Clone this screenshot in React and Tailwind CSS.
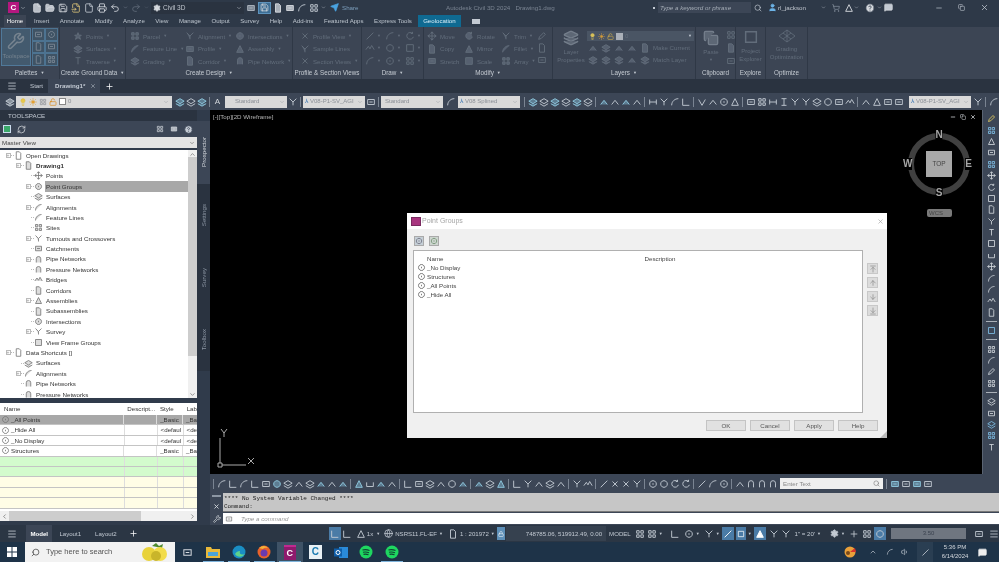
import React from 'react';
import {
  Menu, Plus, X, Minus, Search, Settings, Save, FolderOpen, File, FileInput, Printer, Undo2, Redo2, Send,
  ChevronUp, ChevronDown, ChevronLeft, ChevronRight, Wrench, RefreshCw, Globe, Lock, Volume1, MessageSquare, Lightbulb,
  Sun, LockOpen, User, ShoppingCart, Copy, Layers, ArrowUp, ArrowDown, ArrowUpToLine, ArrowDownToLine, CircleHelp,
} from 'lucide-react';

const P = {
  a: 'M2 10L10 2', b: 'M2 2h8v8H2z', c: 'M6 2a4 4 0 1 0 .01 0', d: 'M2 3v6M10 3v6M2 6h8', e: 'M2 10h8M2 10V2',
  f: 'M2 10C2 5 6 2 10 2', g: 'M2 2h3v3H2zM7 2h3v3H7zM2 7h3v3H2zM7 7h3v3H7z', h: 'M6 2l4 8H2z', i: 'M6 2v8M3 10h6M3 2h6',
  j: 'M6 1v10M1 6h10M4 3l2-2 2 2M4 9l2 2 2-2M3 4L1 6l2 2M9 4l2 2-2 2', k: 'M3 3l6 6M9 3l-6 6', l: 'M1 5l5-3 5 3-5 3zM1 8l5 3 5-3',
  m: 'M2 3h8v6H2zM4 6h4', n: 'M3 10V5a3 3 0 0 1 6 0v5', o: 'M6 2a4 4 0 1 0 .01 0M6 5v2', p: 'M2 10l1-3 5-5 2 2-5 5z',
  q: 'M2 9l4-5 4 5', r: 'M9 3a4 4 0 1 0 1 4M9 1v2H7', s: 'M6 2l1 3h3l-2 2 1 3-3-2-3 2 1-3-2-2h3z', t: 'M3 2h6M6 2v8',
  u: 'M2 4v5h8V4', v: 'M2 3l4 7 4-7', w: 'M1 8l3-4 2 3 2-4 3 5', x: 'M3 1h4l2 2v8H3z', y: 'M2 2l4 4v4M10 2L6 6', z: 'M2 3h8L2 9h8',
};

const Ico = ({ k, size = 10, className = 'text-[#c3cad3]', fill = 'none' }) => (
  <svg width={size} height={size} viewBox="0 0 12 12" fill={fill} stroke="currentColor" strokeWidth="1.1" className={`shrink-0 ${className}`}>
    <path d={P[k]} />
  </svg>
);

// '|' is a separator, capitals get the blue accent
const Strip = ({ seq, className = '' }) => (
  <div className={`flex items-center ${className}`}>
    {seq.split('').map((c, i) =>
      c === '|' ? (
        <div key={i} className="w-px h-[10px] bg-[#7a8492] mx-[2px] shrink-0" />
      ) : c === c.toUpperCase() ? (
        <div key={i} className="w-[11px] flex justify-center shrink-0"><Ico k={c.toLowerCase()} className="text-[#8fcbe0]" fill="#5d7d92" /></div>
      ) : (
        <div key={i} className="w-[11px] flex justify-center shrink-0"><Ico k={c} /></div>
      )
    )}
  </div>
);

const Combo = ({ w, children }) => (
  <div className={`${w} h-[12px] bg-[#d9d9d9] flex items-center px-[2px] text-[6px] text-[#8a8f96] shrink-0`}>
    {children}
    <ChevronDown size={6} className="ml-auto text-[#9aa0a6]" />
  </div>
);

const Caret = ({ className = '' }) => <span className={`text-[4px] ${className}`}>▼</span>;

const TitleBar = () => (
  <div className="h-[15px] bg-[#2e3948] flex items-center relative text-[6.2px] text-[#8d97a4] shrink-0">
    <div className="ml-[8px] w-[11px] h-[11px] bg-[#b5177f] text-white text-[8px] font-bold flex items-center justify-center">C</div>
    <ChevronDown size={6} className="ml-[1px] text-[#c3cad3]" />
    <div className="flex items-center gap-[3px] ml-[6px]">
      <File size={10} className="text-[#d5d9de]" fill="#b8bec6" />
      <FolderOpen size={10} className="text-[#d5d9de]" fill="#b8bec6" />
      <Save size={10} className="text-[#d5d9de]" />
      <FileInput size={10} className="text-[#d8c27a]" />
      <File size={10} className="text-[#c3cad3]" />
      <Printer size={10} className="text-[#d5d9de]" />
      <Undo2 size={10} className="text-[#d5d9de]" />
      <ChevronDown size={5} className="text-[#8d97a4]" />
      <Redo2 size={10} className="text-[#606b79]" />
      <ChevronDown size={5} className="text-[#606b79]" />
    </div>
    <div className="ml-[2px] w-[93px] h-[12px] bg-[#2a3340] flex items-center px-[2px] text-[6.5px] text-[#c0c6ce] shrink-0">
      <Settings size={8} className="mr-[2px] text-[#d5d9de]" fill="#d5d9de" />Civil 3D
      <ChevronDown size={6} className="ml-auto" />
    </div>
    <div className="flex items-center gap-[2px] ml-[2px]">
      <Ico k="m" className="text-[#aeb6c0]" fill="#7c8794" />
      <div className="w-[13px] h-[12px] bg-[#3d6e95] border border-[#5d93bd] flex items-center justify-center"><Save size={9} className="text-[#d5d9de]" /></div>
      <Ico k="x" className="text-[#d5d9de]" fill="#a9b0b9" />
      <Ico k="m" className="text-[#d5d9de]" fill="#a9b0b9" />
      <Ico k="f" />
      <Ico k="g" />
      <ChevronDown size={5} className="text-[#c3cad3]" />
      <Send size={9} className="ml-[2px] text-[#4aa3e0]" fill="#4aa3e0" />
    </div>
    <span className="ml-[3px] text-[#7d9fbd]">Share</span>
    <span className="absolute left-[446px] text-[#7a8492]">Autodesk Civil 3D 2024&nbsp;&nbsp;&nbsp;Drawing1.dwg</span>
    <div className="absolute left-[653px] flex items-center">
      <div className="w-[2px] h-[2px] bg-[#c3cad3] mr-[3px]" />
      <div className="w-[93px] h-[11px] bg-[#3c4656] flex items-center px-[2px] italic text-[#a4acb6]">Type a keyword or phrase</div>
      <Search size={8} className="ml-[3px] text-[#c3cad3]" />
      <User size={9} className="ml-[6px] text-[#6db4e8]" fill="#6db4e8" />
      <span className="ml-[1px] text-[#c0c6ce]">rl_jackson</span>
      <ChevronDown size={5} className="ml-[15px] text-[#c3cad3]" />
      <ShoppingCart size={8} className="ml-[6px] text-[#8d97a4]" />
      <Ico k="h" className="ml-[4px] text-[#d5d9de]" />
      <ChevronDown size={5} className="text-[#c3cad3]" />
      <CircleHelp size={10} className="ml-[6px] text-[#303b4b]" fill="#d5d9de" />
      <ChevronDown size={5} className="ml-[2px] text-[#c3cad3]" />
      <MessageSquare size={9} className="ml-[2px] text-[#d5d9de]" fill="#c3cad3" />
    </div>
    <div className="absolute left-[935px] flex items-center gap-[15px] text-[#c3cad3]">
      <Minus size={8} />
      <Copy size={7} />
      <X size={9} />
    </div>
  </div>
);

const tabs = ['Insert', 'Annotate', 'Modify', 'Analyze', 'View', 'Manage', 'Output', 'Survey', 'Help', 'Add-ins', 'Featured Apps', 'Express Tools'];

const TabRow = () => (
  <div className="h-[12px] bg-[#2e3948] flex items-end text-[6.1px] text-[#bcc4cd] shrink-0">
    <div className="ml-[4px] w-[22px] h-[12px] bg-[#3c4554] text-white flex items-center justify-center">Home</div>
    <div className="flex items-center gap-[10.5px] h-[12px] ml-[8px]">
      {tabs.map(t => <span key={t}>{t}</span>)}
    </div>
    <div className="ml-[6px] w-[43px] h-[12px] bg-[#0f6a92] text-[#d8eef8] flex items-center justify-center">Geolocation</div>
    <div className="ml-[11px] mb-[3px] w-[8px] h-[5px] bg-[#c3cad3]" />
  </div>
);

const DIM = 'text-[#626d7b]';

const Item = ({ k, label, w = 'w-auto', drop = true }) => (
  <div className={`h-[12.5px] shrink-0 flex items-center gap-[3px] text-[6.1px] ${DIM} ${w} whitespace-nowrap`}>
    <Ico k={k} className={DIM} fill="#566070" />
    <span>{label}</span>
    {drop && <Caret />}
  </div>
);

const Panel = ({ title, w, caret = true, children, className = '' }) => (
  <div className={`${w} shrink-0 flex flex-col border-r border-[#2f3846]`}>
    <div className={`h-[40px] flex ${className}`}>{children}</div>
    <div className="h-[12px] flex items-center justify-center text-[6.3px] text-[#c5cbd2] whitespace-nowrap">
      {title}{caret && <Caret className="ml-[3px]" />}
    </div>
  </div>
);

const Col = ({ children, className = '' }) => <div className={`flex flex-col pt-[3px] ${className}`}>{children}</div>;

const Ribbon = () => (
  <div className="h-[52px] bg-[#3c4554] flex shrink-0">
    <Panel title="Palettes" w="w-[60px]" className="p-[1px]">
      <div className="w-[30px] h-[38px] bg-[#435a6e] border border-[#50799a] flex flex-col items-center">
        <Wrench size={18} className="mt-[3px] text-[#76838f]" />
        <span className="mt-[2px] text-[6px] text-[#76838f]">Toolspace</span>
      </div>
      <div className="grid grid-cols-2 grid-rows-3 ml-[1px] w-[26px]">
        {['m', 'o', 'x', 'm', 'x', 'g'].map((k, i) => (
          <div key={i} className="bg-[#3f5365] border border-[#4d7391] flex items-center justify-center"><Ico k={k} size={9} className="text-[#7e8a96]" /></div>
        ))}
      </div>
    </Panel>
    <Panel title="Create Ground Data" w="w-[66px]" className="pl-[13px]">
      <Col>
        <Item k="s" label="Points" />
        <Item k="l" label="Surfaces" />
        <Item k="t" label="Traverse" />
      </Col>
    </Panel>
    <Panel title="Create Design" w="w-[167px]" className="pl-[4px]">
      <Col className="w-[55px]">
        <Item k="g" label="Parcel" />
        <Item k="f" label="Feature Line" />
        <Item k="l" label="Grading" />
      </Col>
      <Col className="w-[50px]">
        <Item k="y" label="Alignment" />
        <Item k="m" label="Profile" />
        <Item k="x" label="Corridor" />
      </Col>
      <Col>
        <Item k="o" label="Intersections" />
        <Item k="h" label="Assembly" />
        <Item k="n" label="Pipe Network" />
      </Col>
    </Panel>
    <Panel title="Profile & Section Views" w="w-[69px]" caret={false} className="pl-[7px]">
      <Col>
        <Item k="k" label="Profile View" />
        <Item k="y" label="Sample Lines" drop={false} />
        <Item k="k" label="Section Views" />
      </Col>
    </Panel>
    <Panel title="Draw" w="w-[62px]" className="pl-[3px]">
      <div className="grid grid-cols-3 gap-x-[4px] pt-[3px] h-[40px]">
        {['a', 'f', 'r', 'w', 'c', 'b', 'f', 'o', 'g'].map((k, i) => (
          <div key={i} className="flex items-center gap-[2px]"><Ico k={k} className={DIM} /><Caret className={DIM} /></div>
        ))}
      </div>
    </Panel>
    <Panel title="Modify" w="w-[129px]" className="pl-[3px]">
      <Col className="w-[37px]">
        <Item k="j" label="Move" drop={false} />
        <Item k="x" label="Copy" drop={false} />
        <Item k="m" label="Stretch" drop={false} />
      </Col>
      <Col className="w-[37px]">
        <Item k="r" label="Rotate" drop={false} />
        <Item k="h" label="Mirror" drop={false} />
        <Item k="b" label="Scale" drop={false} />
      </Col>
      <Col className="w-[36px]">
        <Item k="y" label="Trim" />
        <Item k="f" label="Fillet" />
        <Item k="g" label="Array" />
      </Col>
      <Col>
        <Ico k="p" className={`${DIM} mt-[1px] mb-[2px]`} />
        <Ico k="x" className={`${DIM} mb-[2px]`} />
        <Ico k="m" className={DIM} />
      </Col>
    </Panel>
    <Panel title="Layers" w="w-[143px]" className="pl-[3px]">
      <div className={`w-[30px] flex flex-col items-center text-[6px] leading-[8px] ${DIM}`}>
        <Layers size={16} className="mt-[3px] text-[#747e8b]" fill="#5d6775" />
        <span className="mt-[2px]">Layer</span>
        <span>Properties</span>
      </div>
      <div className="flex flex-col ml-[1px] pt-[4px]">
        <div className="w-[107px] h-[10px] bg-[#4a5564] flex items-center gap-[2px] px-[2px]">
          <Lightbulb size={7} className="text-[#d8c15a]" fill="#d8c15a" />
          <Sun size={7} className="text-[#d09a3a]" fill="#d09a3a" />
          <LockOpen size={7} className="text-[#d8b14a]" />
          <div className="w-[7px] h-[7px] bg-[#aab0b8]" />
          <span className={`text-[6px] ${DIM}`}>0</span>
          <Caret className="ml-auto text-[#c3cad3]" />
        </div>
        <div className={`h-[13px] flex items-center gap-[3px] pl-[1px] text-[6.1px] ${DIM}`}>
          {['q', 'l', 'q', 'q', 'x'].map((k, i) => <Ico key={i} k={k} className={DIM} fill="#566070" />)}
          <span>Make Current</span>
        </div>
        <div className={`h-[12px] flex items-center gap-[3px] pl-[1px] text-[6.1px] ${DIM}`}>
          {['l', 'l', 'l', 'q', 'l'].map((k, i) => <Ico key={i} k={k} className={DIM} fill="#566070" />)}
          <span>Match Layer</span>
        </div>
      </div>
    </Panel>
    <Panel title="Clipboard" w="w-[40px]" caret={false} className="pl-[7px]">
      <div className={`flex flex-col items-center text-[6px] ${DIM}`}>
        <Copy size={16} className="mt-[3px] text-[#747e8b]" fill="#5d6775" />
        <span className="mt-[2px]">Paste</span>
        <Caret />
      </div>
      <div className="flex flex-col ml-[7px] gap-[3px] pt-[3px]">
        <Ico k="g" className={DIM} />
        <Ico k="x" className={DIM} fill="#566070" />
        <Ico k="m" className={DIM} />
      </div>
    </Panel>
    <Panel title="Explore" w="w-[30px]" caret={false}>
      <div className={`w-full flex flex-col items-center text-[6px] leading-[8px] ${DIM}`}>
        <Ico k="b" size={16} className={`${DIM} mt-[2px]`} />
        <span className="mt-[2px]">Project</span>
        <span>Explorer</span>
      </div>
    </Panel>
    <Panel title="Optimize" w="w-[42px]" caret={false}>
      <div className={`w-full flex flex-col items-center text-[6px] leading-[8px] ${DIM}`}>
        <svg width="18" height="14" viewBox="0 0 18 14" fill="none" stroke="currentColor" strokeWidth="0.8" className={`${DIM} mt-[2px]`}>
          <path d="M9 1l8 6-8 6-8-6zM5 4l8 6M9 1v12M13 4L5 10" />
        </svg>
        <span className="mt-[2px]">Grading</span>
        <span>Optimization</span>
      </div>
    </Panel>
  </div>
);

const DocTabs = () => (
  <div className="h-[14px] bg-[#2a3340] flex items-center text-[6.2px] text-[#c3cad3] shrink-0">
    <Menu size={10} className="ml-[7px]" />
    <span className="ml-[13px]">Start</span>
    <div className="ml-[5px] w-[52px] h-[14px] bg-[#3c4656] flex items-center pl-[7px] font-bold">
      Drawing1*<X size={6} className="ml-[5px] font-normal" />
    </div>
    <Plus size={9} className="ml-[5px] text-white" />
  </div>
);

const TopToolbar = () => (
  <div className="h-[17px] bg-[#3c4656] flex items-center shrink-0 overflow-hidden">
    <div className="ml-[5px]"><Ico k="l" className="text-[#c3cad3]" fill="#8a949f" /></div>
    <div className="ml-[1px] w-[156px] h-[12px] bg-[#d9d9d9] flex items-center gap-[2px] px-[3px] text-[6px] text-[#8a8f96] shrink-0">
      <Lightbulb size={8} className="text-[#e0b93a]" fill="#e8c94a" />
      <Sun size={8} className="text-[#e09a2a]" fill="#e8a83a" />
      <Ico k="g" size={8} className="text-[#8a8f96]" />
      <LockOpen size={8} className="text-[#d98a1a]" />
      <div className="w-[7px] h-[7px] bg-white border border-[#888]" />
      <span>0</span>
      <ChevronDown size={6} className="ml-auto text-[#9aa0a6]" />
    </div>
    <Strip seq="LlL|" className="ml-[2px]" />
    <span className="w-[12px] text-center text-[8px] text-[#d5d9de]">A</span>
    <div className="ml-[2px]"><Combo w="w-[62px]"><span className="ml-[8px]">Standard</span></Combo></div>
    <Strip seq="y|" />
    <Combo w="w-[62px]"><span className="text-[#2f6fb0] mr-[2px]">⅄</span>V08-P1-SV_AGI</Combo>
    <Strip seq="m|" />
    <Combo w="w-[62px]"><span className="ml-[2px]">Standard</span></Combo>
    <Strip seq="f" className="mx-[2px]" />
    <Combo w="w-[62px]"><span className="text-[#2f6fb0] mr-[2px]">⅄</span>V08 Splined</Combo>
    <Strip seq="|LlLlLl|QqQq|dyfe|vqoh|mgdiyylcmw|qhmm" className="ml-[2px]" />
    <div className="ml-[5px]"><Combo w="w-[62px]"><span className="text-[#2f6fb0] mr-[2px]">⅄</span>V08-P1-SV_AGI</Combo></div>
    <Strip seq="y|f" className="ml-[1px]" />
  </div>
);

const treeRows = [
  ['Open Drawings', 0, 'x', true],
  ['Drawing1', 1, 'x', true, true],
  ['Points', 2, 'j', false],
  ['Point Groups', 2, 'o', true],
  ['Surfaces', 2, 'l', false],
  ['Alignments', 2, 'f', true],
  ['Feature Lines', 2, 'f', false],
  ['Sites', 2, 'g', false],
  ['Turnouts and Crossovers', 2, 'y', true],
  ['Catchments', 2, 'm', false],
  ['Pipe Networks', 2, 'n', true],
  ['Pressure Networks', 2, 'n', false],
  ['Bridges', 2, 'w', false],
  ['Corridors', 2, 'x', false],
  ['Assemblies', 2, 'h', true],
  ['Subassemblies', 2, 'x', false],
  ['Intersections', 2, 'o', false],
  ['Survey', 2, 'y', true],
  ['View Frame Groups', 2, 'b', false],
  ['Data Shortcuts []', 0, 'x', true],
  ['Surfaces', 1, 'l', false],
  ['Alignments', 1, 'f', true],
  ['Pipe Networks', 1, 'n', false],
  ['Pressure Networks', 1, 'n', false],
];

const indentCls = ['pl-[5px]', 'pl-[15px]', 'pl-[25px]'];

const Tree = () => (
  <div className="h-[248px] bg-white flex overflow-hidden shrink-0">
    <div className="flex-1 min-w-0">
      {treeRows.map(([label, lvl, k, exp, bold], i) => (
        <div key={i} className={`h-[10.4px] flex items-center ${indentCls[lvl]} text-[#333] text-[6.2px] whitespace-nowrap`}>
          <div className="w-[6px] h-[6px] flex items-center justify-center shrink-0">
            {exp && <div className="w-[5px] h-[5px] border border-[#bbb] text-[#999] text-[5px] leading-[3px] text-center">+</div>}
          </div>
          <div className="w-[3px] border-t border-dotted border-[#bbb] shrink-0" />
          <Ico k={k} size={9} className="text-[#777]" fill={lvl === 0 ? 'none' : '#ddd'} />
          <div className={`ml-[2px] flex-1 h-[10.4px] flex items-center pl-[1px] ${label === 'Point Groups' ? 'bg-[#a8a8a8]' : ''} ${bold ? 'font-bold' : ''}`}>{label}</div>
        </div>
      ))}
    </div>
    <div className="w-[9px] bg-[#f0f0f0] flex flex-col items-center shrink-0">
      <ChevronUp size={7} className="mt-[1px] text-[#555]" />
      <div className="w-full h-[199px] bg-[#cdcdcd] mt-[-1px]" />
      <ChevronDown size={7} className="mt-auto text-[#555]" />
    </div>
  </div>
);

const tableRows = [
  ['_All Points', '_Basic', '_Ba', 'bg-[#a8a8a8]'],
  ['_Hide All', '<defaul', '<de', 'bg-white'],
  ['_No Display', '<defaul', '<de', 'bg-white'],
  ['Structures', '_Basic', '_Ba', 'bg-white'],
  ['', '', '', 'bg-[#d3fbcd]'],
  ['', '', '', 'bg-[#d3fbcd]'],
  ['', '', '', 'bg-[#fffde6]'],
  ['', '', '', 'bg-[#fffde6]'],
  ['', '', '', 'bg-[#fffde6]'],
];

const PointTable = () => (
  <div className="flex-1 bg-white flex flex-col text-[6.2px] text-[#333] overflow-hidden">
    <div className="h-[12px] flex items-center shrink-0">
      <div className="w-[125px] pl-[4px]">Name</div>
      <div className="w-[33px] pl-[4px] whitespace-nowrap">Descript...</div>
      <div className="w-[26px] pl-[4px]">Style</div>
      <div className="pl-[5px]">Lab</div>
    </div>
    {tableRows.map(([n, s, l, bg], i) => (
      <div key={i} className={`h-[10.4px] flex items-center border-b border-[#c4c4c4] shrink-0 ${bg}`}>
        <div className="w-[125px] h-full flex items-center border-r border-[#ddd] pl-[1px] whitespace-nowrap">
          {n && <Ico k="o" size={9} className="text-[#777] mr-[1px]" />}{n}
        </div>
        <div className="w-[33px] h-full border-r border-[#ddd]" />
        <div className="w-[26px] h-full flex items-center border-r border-[#ddd] pl-[3px] overflow-hidden whitespace-nowrap">{s}</div>
        <div className="pl-[3px] overflow-hidden whitespace-nowrap">{l}</div>
      </div>
    ))}
    <div className="h-[10px] mt-auto bg-[#f0f0f0] flex items-center shrink-0">
      <ChevronLeft size={7} className="text-[#555] ml-[1px] mr-[1px]" />
      <div className="w-[132px] h-full bg-[#cdcdcd]" />
      <ChevronRight size={7} className="ml-auto text-[#555] mr-[1px]" />
    </div>
  </div>
);

const ToolspacePalette = () => (
  <div className="w-[197px] flex flex-col bg-[#303b4b] shrink-0 pb-[4px]">
    <div className="h-[11px] bg-[#2a3340] flex items-center pl-[8px] text-[6.2px] text-[#c3cad3] shrink-0">TOOLSPACE</div>
    <div className="h-[16px] bg-[#3c4656] flex items-center shrink-0">
      <div className="ml-[3px] w-[8px] h-[8px] bg-[#3aa86a] border border-[#cde] shrink-0" />
      <RefreshCw size={9} className="ml-[6px] text-[#d5d9de]" />
      <div className="ml-auto mr-[4px] flex gap-[6px] items-center">
        <Ico k="g" size={8} className="text-[#d5d9de]" />
        <Ico k="m" size={8} className="text-[#d5d9de]" fill="#aab0b8" />
        <CircleHelp size={9} className="text-[#3c4656]" fill="#c3cad3" />
      </div>
    </div>
    <div className="h-[11px] bg-[#e4e4e4] flex items-center px-[2px] text-[6.2px] text-[#444] shrink-0">
      Master View<ChevronDown size={6} className="ml-auto text-[#555]" />
    </div>
    <div className="h-[2px] shrink-0" />
    <Tree />
    <div className="h-[5px] shrink-0" />
    <PointTable />
  </div>
);

const VTab = ({ label, on }) => (
  <div className={`h-[62.5px] flex items-center justify-center text-[6.2px] ${on ? 'bg-[#3c4656] text-[#d5d9de]' : 'bg-[#2a3340] text-[#8d97a4]'}`}>
    <span className="[writing-mode:vertical-rl] rotate-180">{label}</span>
  </div>
);

const ViewCube = () => (
  <div className="absolute left-[698px] top-[23px] w-[62px] h-[62px] rounded-full border-[6px] border-[#404040] flex items-center justify-center">
    <div className="w-[26px] h-[26px] bg-[#a8a8a8] flex items-center justify-center text-[6.5px] text-[#444]">TOP</div>
    <span className="absolute -top-[10px] left-1/2 -translate-x-1/2 text-[10px] leading-[12px] font-bold text-[#a6a6a6] bg-black">N</span>
    <span className="absolute -bottom-[10px] left-1/2 -translate-x-1/2 text-[10px] leading-[12px] font-bold text-[#a6a6a6] bg-black">S</span>
    <span className="absolute -left-[11px] top-1/2 -translate-y-1/2 text-[10px] leading-[12px] font-bold text-[#a6a6a6] bg-black">W</span>
    <span className="absolute -right-[8px] top-1/2 -translate-y-1/2 text-[10px] leading-[12px] font-bold text-[#a6a6a6] bg-black">E</span>
  </div>
);

const ArrowBtn = ({ Icon }) => (
  <div className="w-[11px] h-[11px] bg-[#dcdcdc] border border-[#c8c8c8] flex items-center justify-center">
    <Icon size={8} className="text-[#888]" />
  </div>
);

const DlgBtn = ({ children }) => (
  <div className="w-[40px] h-[11px] bg-[#e1e1e1] border border-[#c4c4c4] flex items-center justify-center text-[6.2px] text-[#555]">{children}</div>
);

const Dialog = () => (
  <div className="absolute left-[197px] top-[103px] w-[480px] h-[225px] bg-[#f0f0f0] flex flex-col">
    <div className="h-[16px] bg-white flex items-center pl-[4px] text-[7px] text-[#a6a6a6]">
      <div className="w-[10px] h-[9px] bg-[#a8357f] border border-[#7a2a60] mr-[1px]" />
      Point Groups
      <X size={7} className="ml-auto mr-[3px] text-[#999]" />
    </div>
    <div className="h-[21px] flex items-center pl-[7px] gap-[5px] pt-[2px]">
      <div className="w-[10px] h-[10px] bg-[#c5cfd6] border border-[#aaa] flex items-center justify-center"><Ico k="o" size={8} className="text-[#667]" /></div>
      <div className="w-[10px] h-[10px] bg-[#cdd6cf] border border-[#aaa] flex items-center justify-center"><Ico k="o" size={8} className="text-[#686]" /></div>
    </div>
    <div className="flex pl-[6px]">
      <div className="w-[450px] h-[163px] bg-white border border-[#b0b0b0] text-[6.2px] text-[#444]">
        <div className="flex pt-[3px] h-[12px]">
          <span className="ml-[13px]">Name</span>
          <span className="ml-[201px]">Description</span>
        </div>
        {['_No Display', 'Structures', '_All Points', '_Hide All'].map(t => (
          <div key={t} className="h-[9px] flex items-center pl-[3px]">
            <Ico k="o" size={9} className="text-[#666]" />
            <span className="ml-[1px]">{t}</span>
          </div>
        ))}
      </div>
      <div className="ml-[4px] flex flex-col gap-[3px] pt-[13px]">
        <ArrowBtn Icon={ArrowUpToLine} />
        <ArrowBtn Icon={ArrowUp} />
        <ArrowBtn Icon={ArrowDown} />
        <ArrowBtn Icon={ArrowDownToLine} />
      </div>
    </div>
    <div className="flex justify-end gap-[4px] pr-[9px] pt-[7px]">
      <DlgBtn>OK</DlgBtn>
      <DlgBtn>Cancel</DlgBtn>
      <DlgBtn>Apply</DlgBtn>
      <DlgBtn>Help</DlgBtn>
    </div>
    <svg width="7" height="7" viewBox="0 0 7 7" className="absolute right-0 bottom-0 text-[#bbb]" fill="currentColor"><path d="M7 0v7H0z" /></svg>
  </div>
);

const Canvas = () => (
  <div className="flex-1 bg-black relative text-[6.2px] text-[#b5b5b5]">
    <span className="absolute left-[3px] top-[2px]">[-][Top][2D Wireframe]</span>
    <div className="absolute right-[6px] top-[4px] flex items-center gap-[4px] text-[#d5d9de]">
      <Minus size={6} strokeWidth={3} />
      <Copy size={6} />
      <X size={6} strokeWidth={3} />
    </div>
    <ViewCube />
    <div className="absolute left-[717px] top-[99px] w-[25px] h-[8px] bg-[#7a7a7a] rounded-[2px] text-[6px] leading-[8px] pl-[2px] text-[#444]">WCS</div>
    <Dialog />
    <svg width="46" height="44" viewBox="0 0 46 44" className="absolute left-[6px] bottom-[5px] text-[#aaa]" fill="none" stroke="currentColor" strokeWidth="1">
      <path d="M4 38V13M6 40h24M2 38h4v4H2z" />
      <path d="M32 33l6 6M38 33l-6 6" />
      <path d="M5 4l3 4 3-4M8 8v4" />
    </svg>
  </div>
);

const BottomToolbar = () => (
  <div className="h-[19px] bg-[#3c4656] flex items-center shrink-0 overflow-hidden">
    <Strip seq="|fefem" className="ml-[1px]" />
    <Strip seq="ClqlQqQ|HuQq|emlqcQ|QlH|ey" />
    <Strip seq="qlq|yw|akky|ocrr|afo|qnnn" />
    <div className="ml-[2px] w-[103px] h-[11px] bg-[#efefef] flex items-center px-[3px] text-[6.2px] text-[#888] shrink-0">
      Enter Text<Search size={7} className="ml-auto text-[#777]" />
    </div>
    <Strip seq="|MmMm" className="ml-[1px]" />
  </div>
);

const CommandLine = () => (
  <div className="h-[32px] flex bg-[#3c4656] shrink-0">
    <div className="w-[13px] flex flex-col items-center justify-between py-[2px] text-[#d5d9de] shrink-0">
      <div className="w-[9px] h-[2px] bg-[#8d97a4]" />
      <X size={7} strokeWidth={3} />
      <Wrench size={8} />
    </div>
    <div className="flex-1 flex flex-col">
      <div className="h-[19px] bg-[#c6c6c6] border-b border-[#777] font-['Liberation_Mono',monospace] text-[6px] leading-[8px] text-[#222] pt-[2px] pl-[1px]">
        <div>**** No System Variable Changed ****</div>
        <div>Command:</div>
      </div>
      <div className="h-[11px] bg-white flex items-center pl-[2px] text-[6.2px] italic text-[#999] mt-px">
        <Ico k="m" size={8} className="text-[#777]" />
        <span className="ml-[8px]">Type a command</span>
      </div>
    </div>
  </div>
);

const vtools = ['p', 'G', 'h', 'm', 'G', 'j', 'r', 'b', 'x', 'y', 't', 'b', 'u', 'j', 'f', 'f', 'w', 'x', '-', 'B', '-', 'g', 'f', 'p', 'g', '-', 'l', 'm', 'L', 'G', 't'];

const RightTools = () => (
  <div className="w-[17px] bg-[#3c4656] flex flex-col items-center pt-[3px] shrink-0 overflow-hidden border-l border-[#5a6472]">
    {vtools.map((k, i) =>
      k === '-' ? (
        <div key={i} className="w-[11px] h-px bg-[#aab0b8] my-[3px] shrink-0" />
      ) : (
        <div key={i} className="h-[11.4px] flex items-center justify-center shrink-0">
          <Ico k={k.toLowerCase()} size={9} className={i === 0 ? 'text-[#e8d060]' : k === k.toUpperCase() ? 'text-[#7fc0e8]' : 'text-[#d5d9de]'} />
        </div>
      )
    )}
  </div>
);

const Blue = ({ children, w = 'w-[12px]' }) => <div className={`${w} h-[13px] bg-[#4a7ba6] flex items-center justify-center shrink-0`}>{children}</div>;

const StatusBar = () => (
  <div className="h-[17px] bg-[#2b3644] flex items-center text-[6.1px] text-[#c3cad3] shrink-0 whitespace-nowrap">
    <Menu size={10} className="ml-[7px] shrink-0" />
    <div className="ml-[9px] w-[28px] h-[17px] bg-[#3c4656] flex items-center justify-center font-bold text-white">Model</div>
    <span className="ml-[7px]">Layout1</span>
    <span className="ml-[14px]">Layout2</span>
    <Plus size={9} className="ml-[12px] text-white shrink-0" />
    <div className="ml-[191px] flex items-center h-[15px]">
      <Blue><Ico k="e" /></Blue>
      <Ico k="e" className="ml-[1px] text-[#c3cad3]" />
      <Ico k="h" className="ml-[4px] text-[#c3cad3]" />
      <span className="ml-[1px]">1x</span>
      <Caret className="ml-[3px]" />
      <Globe size={9} className="ml-[4px] shrink-0" />
      <span className="ml-[2px]">NSRS11.FL-EF</span>
      <Caret className="ml-[2px]" />
      <Ico k="x" className="ml-[5px]" />
      <span className="ml-[2px]">1 : 201972</span>
      <Caret className="ml-[2px]" />
      <div className="ml-[2px] w-[8px] h-[13px] bg-[#5d8fb8] flex items-center justify-center"><Lock size={6} className="text-white" /></div>
    </div>
    <div className="ml-[1px] pl-[20px] pr-[4px] h-[15px] bg-[#36414f] flex items-center">748785.06, 519912.49, 0.00</div>
    <span className="ml-[3px]">MODEL</span>
    <div className="ml-[4px] flex items-center gap-[2px]">
      <Ico k="g" />
      <Ico k="g" />
      <Caret />
      <Ico k="e" className="ml-[5px]" />
      <Ico k="o" className="ml-[2px]" />
      <Caret />
      <Ico k="y" className="ml-[2px]" />
      <Caret />
      <Blue><Ico k="a" className="text-white" /></Blue>
      <Blue w="w-[10px]"><Ico k="b" size={8} className="text-white" /></Blue>
      <Caret />
      <Blue><Ico k="h" className="text-white" fill="#fff" /></Blue>
      <Ico k="y" className="ml-[1px]" />
      <Ico k="y" />
      <span className="ml-[2px]">1" = 20'</span>
      <Caret />
      <Settings size={9} className="ml-[7px] shrink-0" fill="#c3cad3" />
      <Caret />
      <Plus size={10} className="ml-[2px] shrink-0" />
      <Ico k="g" className="ml-[1px]" />
      <Blue><Ico k="c" /></Blue>
      <div className="ml-[3px] w-[75px] h-[11px] bg-[#6f7680] flex items-center justify-center text-[6px] text-[#3a424e]">3.50</div>
      <Ico k="m" className="ml-[6px]" />
      <Menu size={10} className="ml-[3px] shrink-0" />
    </div>
  </div>
);

const Spotify = () => (
  <svg width="14" height="14" viewBox="0 0 14 14" fill="none" stroke="#143" strokeWidth="1.1">
    <circle cx="7" cy="7" r="6.5" fill="#1ed760" stroke="none" />
    <path d="M3.5 5q3.5-1 7 .5M4 7.3q3-.8 6 .5M4.5 9.4q2.5-.6 5 .4" />
  </svg>
);

const TaskIcon = ({ children, on, line }) => (
  <div className={`w-[25.5px] h-[20px] flex items-center justify-center relative shrink-0 ${on ? 'bg-[#3e5266]' : ''}`}>
    {children}
    {line && <div className="absolute bottom-0 left-[2px] right-[2px] h-px bg-[#7fb4dc]" />}
  </div>
);

const Taskbar = () => (
  <div className="h-[20px] bg-[#1e3348] flex items-center shrink-0 relative">
    <svg width="10" height="10" viewBox="0 0 10 10" fill="#fff" className="ml-[7px] shrink-0">
      <path d="M0 0h4.5v4.5H0zM5.5 0H10v4.5H5.5zM0 5.5h4.5V10H0zM5.5 5.5H10V10H5.5z" />
    </svg>
    <div className="ml-[8px] w-[150px] h-[20px] bg-[#f2f2f2] flex items-center text-[7.5px] text-[#555] relative shrink-0">
      <Search size={9} className="ml-[6px] text-[#444] -scale-x-100" />
      <span className="ml-[6px]">Type here to search</span>
      <svg width="30" height="19" viewBox="0 0 30 19" className="ml-auto mr-[5px]">
        <path d="M12 3l4-3 3 3 4-2-1 4z" fill="#4d8a2f" />
        <circle cx="9" cy="11" r="7" fill="#e8d23a" />
        <circle cx="20" cy="11" r="7" fill="#f2dc4a" />
        <circle cx="16" cy="13" r="5" fill="#c9b52a" />
      </svg>
    </div>
    <div className="flex">
      <TaskIcon><Ico k="m" size={11} className="text-[#d5d9de]" /></TaskIcon>
      <TaskIcon line>
        <svg width="14" height="12" viewBox="0 0 14 12"><path d="M0 1h5l1 2h8v9H0z" fill="#e8b93a" /><path d="M2 6h10v4H2z" fill="#4aa3d8" /></svg>
      </TaskIcon>
      <TaskIcon line>
        <svg width="14" height="14" viewBox="0 0 14 14"><circle cx="7" cy="7" r="6.5" fill="#1a8ec4" /><path d="M3 9c2 4 8 3 10 0-3 1-6 1-5-3-2 0-4 1-5 3z" fill="#5fd38a" /></svg>
      </TaskIcon>
      <TaskIcon line>
        <svg width="14" height="14" viewBox="0 0 14 14"><circle cx="7" cy="7" r="6.5" fill="#e8622a" /><circle cx="7" cy="8" r="3.5" fill="#6a3ab0" /><path d="M2 3q5-4 9 0-4-1-5 1z" fill="#f2b43a" /></svg>
      </TaskIcon>
      <TaskIcon on line>
        <div className="w-[12px] h-[15px] bg-[#8f1a6d] border-t-2 border-[#c02a90] text-white text-[9px] font-bold leading-[12px] text-center">C</div>
      </TaskIcon>
      <TaskIcon>
        <div className="w-[13px] h-[14px] bg-[#e8f0f4] text-[#1a7ab0] text-[10px] font-bold leading-[14px] text-center">C</div>
      </TaskIcon>
      <TaskIcon>
        <svg width="14" height="13" viewBox="0 0 14 13"><path d="M5 1h9v11H5z" fill="#2a8ad8" /><path d="M0 2.5h8v8H0z" fill="#0f5ea8" /><circle cx="4" cy="6.5" r="2" fill="none" stroke="#fff" /></svg>
      </TaskIcon>
      <TaskIcon><Spotify /></TaskIcon>
      <TaskIcon line><Spotify /></TaskIcon>
    </div>
    <svg width="12" height="12" viewBox="0 0 12 12" className="absolute left-[844px]"><circle cx="6" cy="6" r="5.5" fill="#e8a03a" /><path d="M6 6l5-4 1 4z" fill="#d8332a" /><circle cx="4" cy="7" r="2" fill="#7a4a1a" /></svg>
    <div className="ml-auto flex items-center text-[#c3cad3]">
      <ChevronUp size={8} />
      <Ico k="f" size={8} className="ml-[9px] text-[#aeb6c0]" />
      <Volume1 size={8} className="ml-[7px]" />
      <div className="ml-[8px] w-[16px] h-[20px] bg-[#2a3e52] flex items-center justify-center"><Ico k="a" size={9} /></div>
      <div className="ml-[8px] w-[28px] text-center text-[6px] leading-[9px] text-[#d5d9de] whitespace-nowrap">5:36 PM<br />6/14/2024</div>
      <MessageSquare size={9} className="ml-[9px] mr-[12px] text-[#eee]" fill="#eee" />
    </div>
  </div>
);

export default function App() {
  return (
    <div className="w-[999px] h-[562px] flex flex-col overflow-hidden font-['Liberation_Sans',sans-serif] bg-[#2b3644] select-none blur-[0.3px]">
      <TitleBar />
      <TabRow />
      <Ribbon />
      <DocTabs />
      <TopToolbar />
      <div className="flex-1 flex min-h-0">
        <ToolspacePalette />
        <div className="w-[13px] bg-[#303b4b] flex flex-col pt-[11px] shrink-0">
          <VTab label="Prospector" on />
          <VTab label="Settings" />
          <VTab label="Survey" />
          <VTab label="Toolbox" />
        </div>
        <div className="flex-1 flex flex-col min-w-0">
          <div className="flex-1 flex min-h-0">
            <Canvas />
            <RightTools />
          </div>
          <BottomToolbar />
          <CommandLine />
        </div>
      </div>
      <StatusBar />
      <Taskbar />
    </div>
  );
}
